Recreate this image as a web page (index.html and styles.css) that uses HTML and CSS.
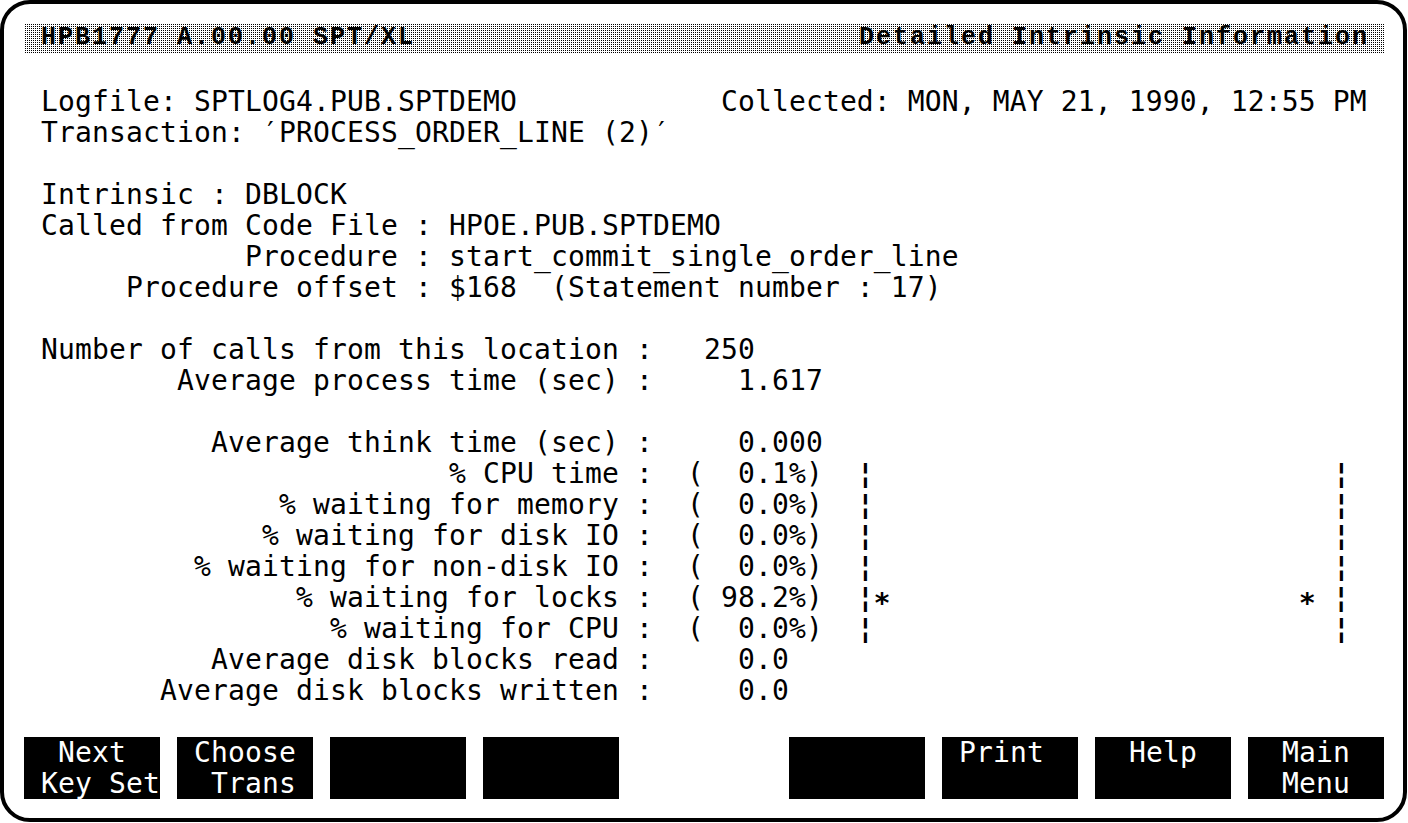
FILE: index.html
```html
<!DOCTYPE html>
<html lang="en">
<head>
<meta charset="utf-8">
<title>Detailed Intrinsic Information</title>
<link rel="stylesheet" href="styles.css">
</head>
<body>
<div class="frame">
  <div class="screen">
    <div class="band"><span>HPB1777 A.00.00 SPT/XL</span><span>Detailed Intrinsic Information</span></div>
    <div class="ln"></div>
    <div class="ln"> Logfile: SPTLOG4.PUB.SPTDEMO            Collected: MON, MAY 21, 1990, 12:55 PM</div>
    <div class="ln"> Transaction: ′PROCESS_ORDER_LINE (2)′</div>
    <div class="ln"></div>
    <div class="ln"> Intrinsic : DBLOCK</div>
    <div class="ln"> Called from Code File : HPOE.PUB.SPTDEMO</div>
    <div class="ln">             Procedure : start_commit_single_order_line</div>
    <div class="ln">      Procedure offset : $168  (Statement number : 17)</div>
    <div class="ln"></div>
    <div class="ln"> Number of calls from this location :   250</div>
    <div class="ln">         Average process time (sec) :     1.617</div>
    <div class="ln"></div>
    <div class="ln">           Average think time (sec) :     0.000</div>
    <div class="ln">                         % CPU time :  (  0.1%)  <span class="chart"><span>¦</span><span>¦</span></span></div>
    <div class="ln">               % waiting for memory :  (  0.0%)  <span class="chart"><span>¦</span><span>¦</span></span></div>
    <div class="ln">              % waiting for disk IO :  (  0.0%)  <span class="chart"><span>¦</span><span>¦</span></span></div>
    <div class="ln">          % waiting for non-disk IO :  (  0.0%)  <span class="chart"><span>¦</span><span>¦</span></span></div>
    <div class="ln">                % waiting for locks :  ( 98.2%)  <span class="chart"><span>¦∗</span><span>∗ ¦</span></span></div>
    <div class="ln">                  % waiting for CPU :  (  0.0%)  <span class="chart"><span>¦</span><span>¦</span></span></div>
    <div class="ln">           Average disk blocks read :     0.0</div>
    <div class="ln">        Average disk blocks written :     0.0</div>
    <div class="ln"></div>
    <div class="keys">
      <div class="key"><span>  Next  </span><span> Key Set</span></div>
      <div class="key"><span> Choose </span><span>  Trans </span></div>
      <div class="key"></div>
      <div class="key"></div>
      <div class="slot"></div>
      <div class="key"></div>
      <div class="key"><span> Print  </span><span></span></div>
      <div class="key"><span>  Help  </span><span></span></div>
      <div class="key"><span>  Main  </span><span>  Menu  </span></div>
    </div>
  </div>
</div>
</body>
</html>
```
FILE: styles.css
```css
html, body {
  margin: 0;
  background: #fff;
}

.frame {
  box-sizing: border-box;
  width: 1407px;
  height: 822px;
  border: 4px solid #000;
  border-radius: 30px;
  padding: 20px 0 0 20px;
  font-family: "DejaVu Sans Mono", monospace;
  font-size: 28px;
  letter-spacing: 0.14px;
  line-height: 31px;
  color: #000;
}

.screen {
  display: grid;
  grid-template-rows: repeat(25, 31px);
  width: 1360px;
}

.ln {
  white-space: pre;
  height: 31px;
}

.band {
  height: 30px;
  display: flex;
  justify-content: space-between;
  padding: 0 15px 0 17px;
  background-color: #fff;
  background-image: conic-gradient(#000 0 25%, #fff 0 100%);
  background-size: 2px 2px;
  font-family: "Liberation Mono", monospace;
  font-weight: bold;
  font-size: 25px;
  letter-spacing: 2px;
  line-height: 28px;
  white-space: pre;
}

.chart {
  display: inline-flex;
  justify-content: space-between;
  width: 493px;
  font-weight: bold;
}

.keys {
  grid-row: span 2;
  display: grid;
  grid-template-columns: repeat(9, 136px);
  column-gap: 17px;
  height: 62px;
}

.key {
  background: #000;
  color: #fff;
  display: flex;
  flex-direction: column;
  white-space: pre;
}

.key span {
  height: 31px;
}
```
